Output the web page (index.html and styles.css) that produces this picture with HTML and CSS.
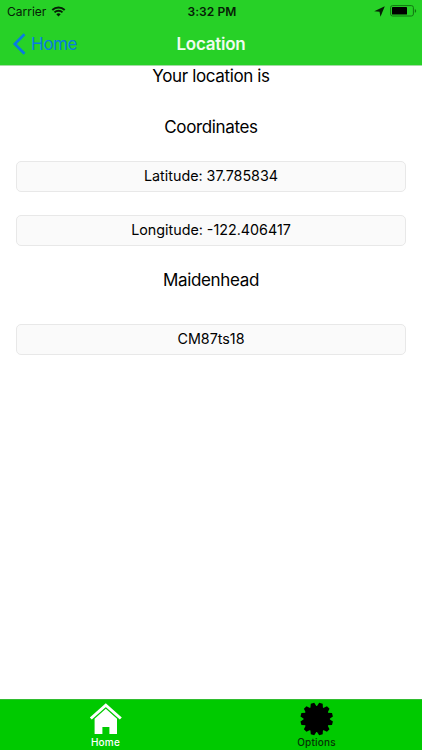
FILE: index.html
```
<!DOCTYPE html>
<html lang="en">
<head>
    <meta charset="UTF-8">
    <meta name="viewport" content="width=device-width, initial-scale=1.0">
    <title>Location</title>
    <link rel="stylesheet" href="styles.css">
</head>
<body>
    <header class="header">
        <div class="status-bar">
            <div class="carrier">
                <span>Carrier</span>
                <svg viewBox="0 0 14 11" width="15" height="11">
                    <path d="M.8 4a8.8 8.8 0 0 1 12.4 0M3 6.4a5.6 5.600 0 0 1 8 0" fill="none" stroke="#062006" stroke-width="1.900"/>
                    <path d="M4.800 8.300a3.100 3.100 0 0 1 4.400 0L7 10.500z" fill="#062006"/>
                </svg>
            </div>
            <span class="time">3:32 PM</span>
            <div class="indicators">
                <svg viewBox="0 0 10 10" width="11" height="11">
                    <path d="M9.800.2L5.900 9.800 5 5.200.2 4.700z" fill="#062006"/>
                </svg>
                <svg viewBox="0 0 27 12" width="27" height="12">
                    <rect x=".6" y=".6" width="22.800" height="10.400" rx="2" fill="none" stroke="#127512"/>
                    <rect x="2" y="2" width="15" height="7.600" rx=".6" fill="#000"/>
                    <path d="M24.800 4v3.800q1.400-.6 1.400-1.900T24.800 4z" fill="#127512"/>
                </svg>
            </div>
        </div>
        <nav class="nav-bar">
            <a class="back" href="#">
                <svg viewBox="0 0 14 22" width="14" height="22">
                    <path d="M12.500 1.300L2.800 11l9.700 9.700" fill="none" stroke="#087be0" stroke-width="2.700"/>
                </svg>
                <span>Home</span>
            </a>
            <h1 class="title">Location</h1>
        </nav>
    </header>

    <main class="content">
        <p class="label">Your location is</p>
        <h2 class="label coordinates">Coordinates</h2>
        <div class="field latitude">Latitude: 37.785834</div>
        <div class="field">Longitude: -122.406417</div>
        <h2 class="label maidenhead">Maidenhead</h2>
        <div class="field">CM87ts18</div>
    </main>

    <footer class="tab-bar">
        <a class="tab active" href="#">
            <svg viewBox="0 0 34 34" width="34" height="34">
                <path d="M1.800 16.500L16.800 3.200l15 13.300" fill="none" stroke="#fff" stroke-width="3"/>
                <path d="M16.800 6.800L28 16.700V32h-7.600v-7h-7v7H5.600V16.700z" fill="#fff"/>
            </svg>
            <span>Home</span>
        </a>
        <a class="tab" href="#">
            <svg viewBox="0 0 34 34" width="34" height="34">
                <defs>
                    <path id="teeth" d="M14.900.7h3.600l1.700 5v22.600l-1.700 5h-3.600l-1.700-5V5.700z"/>
                </defs>
                <circle cx="16.700" cy="17" r="13"/>
                <use href="#teeth" transform="rotate(15 16.700 17)"/>
                <use href="#teeth" transform="rotate(45 16.700 17)"/>
                <use href="#teeth" transform="rotate(75 16.700 17)"/>
                <use href="#teeth" transform="rotate(105 16.700 17)"/>
                <use href="#teeth" transform="rotate(135 16.700 17)"/>
                <use href="#teeth" transform="rotate(165 16.700 17)"/>
            </svg>
            <span>Options</span>
        </a>
    </footer>
</body>
</html>
```
FILE: styles.css
```
:root {
    --nav-bg: #27d127;
    --tab-bg: #00ca00;
    --field-bg: #fafafa;
    --field-border: #e8e8e8;
    --link-color: #087be0;
}

* {
    box-sizing: border-box;
}

body {
    margin: 0;
    height: 750px;
    display: flex;
    flex-direction: column;
    font-family: Inter, sans-serif;
    background-color: #fff;
    color: #000;
    overflow: hidden;
}

a {
    color: inherit;
    text-decoration: none;
}

.header {
    height: 66px;
    background-color: var(--nav-bg);
    border-bottom: 1px solid #a4dca4;
}

.status-bar {
    display: grid;
    grid-template-columns: 1fr auto 1fr;
    align-items: center;
    height: 22px;
    padding: 0 5px 0 7px;
    font-size: 12px;
    color: #062006;
}

.carrier,
.indicators {
    display: flex;
    align-items: center;
    gap: 5px;
}

.indicators {
    justify-content: flex-end;
}

.time {
    font-weight: 600;
    letter-spacing: 0.1px;
}

.nav-bar {
    display: grid;
    grid-template-columns: 1fr auto 1fr;
    align-items: center;
    height: 43px;
    padding: 0 12px;
}

.back {
    display: flex;
    align-items: center;
    gap: 5px;
    font-size: 17px;
    letter-spacing: -0.4px;
    color: var(--link-color);
}

.title {
    margin: 0;
    font-size: 17px;
    font-weight: 600;
    letter-spacing: -0.25px;
    color: #effcef;
}

.content {
    flex: 1;
    padding: 0 16px;
    text-align: center;
}

.label {
    margin: 0;
    font-size: 17px;
    font-weight: 400;
    line-height: 20px;
    letter-spacing: -0.36px;
}

.coordinates {
    margin: 31px 0 24px;
}

.field {
    height: 31px;
    border: 1px solid var(--field-border);
    border-radius: 5px;
    background-color: var(--field-bg);
    font-size: 14.3px;
    line-height: 28px;
}

.latitude {
    margin-bottom: 23px;
}

.maidenhead {
    margin: 24px 0 34px;
}

.tab-bar {
    display: flex;
    height: 51px;
    background-color: var(--tab-bg);
    border-top: 1px solid #2fbd2f;
}

.tab {
    flex: 1;
    display: flex;
    flex-direction: column;
    align-items: center;
    padding-top: 2px;
    font-size: 10px;
    font-weight: 500;
    line-height: 13px;
    letter-spacing: 0.2px;
    color: #063006;
}

.active {
    color: #fff;
}
```
